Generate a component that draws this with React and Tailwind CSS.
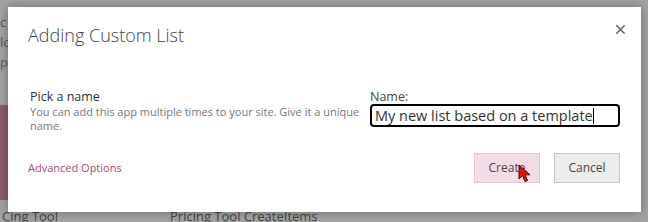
import React from 'react';
import { X } from 'lucide-react';

function Cursor() {
  return (
    <svg width="14" height="20" viewBox="0 0 14 20" className="absolute left-[518px] top-[164px]">
      <path d="M1 1 L1 15 L4.5 11.5 L7 17.5 L9.5 16.5 L7 10.8 L12 10.8 Z" fill="#e01010" stroke="#600" strokeWidth="1" strokeLinejoin="round" />
    </svg>
  );
}

export default function App() {
  return (
    <div className="relative w-[648px] h-[222px] overflow-hidden bg-[#a3a3a3]" style={{ fontFamily: '"Open Sans", "Noto Sans", sans-serif' }}>
      {/* page behind the overlay */}
      <div className="absolute left-0 top-[12px] text-[13px] leading-[20px] text-[#555]">
        <div>c</div>
        <div>lc</div>
        <div className="text-[#7a4a7a]">p</div>
      </div>
      <div className="absolute left-0 top-[105px] w-[8px] h-[95px] bg-[#8c5c6c]" />
      <div className="absolute left-[2px] top-[207px] text-[13px] leading-[18px] text-[#444]">Cing Tool</div>
      <div className="absolute left-[170px] top-[207px] text-[13px] leading-[18px] text-[#444]">Pricing Tool CreateItems</div>

      <div className="absolute left-[8px] top-[7px] w-[633px] h-[205px] bg-white shadow-[0_0_10px_rgba(0,0,0,0.35)]">
        <div className="flex items-start justify-between pl-[20px] pr-[13px] pt-[15px]">
          <h1 className="text-[18px] font-light text-[#444] leading-[26px]">Adding Custom List</h1>
          <X className="w-[15px] h-[15px] text-[#666]" strokeWidth={2.5} />
        </div>

        <div className="flex pl-[22px] pt-[41px]">
          <div className="w-[330px]">
            <div className="text-[12.5px] leading-[16px] text-[#333]">Pick a name</div>
            <div className="text-[11px] leading-[14px] text-[#777]">
              You can add this app multiple times to your site. Give it a unique name.
            </div>
          </div>
          <div className="ml-[10px] w-[250px]">
            <div className="text-[12.5px] leading-[15px] text-[#444]">Name:</div>
            <div className="h-[23px] border-2 border-black rounded-[4px] flex items-center px-[3px] text-[14.5px] text-[#333]">
              My new list based on a template
              <span className="inline-block w-[1px] h-[16px] bg-black" />
            </div>
          </div>
        </div>

        <div className="flex items-center pl-[20px] pr-[21px] pt-[20px]">
          <span className="text-[11px] text-[#b0457e]">Advanced Options</span>
          <div className="ml-auto flex gap-[14px]">
            <button className="w-[66px] h-[30px] bg-[#f2dde6] border border-[#e7c4d3] text-[12px] text-[#444]">Create</button>
            <button className="w-[66px] h-[30px] bg-[#ececec] border border-[#c6c6c6] text-[12px] text-[#444]">Cancel</button>
          </div>
        </div>
      </div>
      <Cursor />
    </div>
  );
}
